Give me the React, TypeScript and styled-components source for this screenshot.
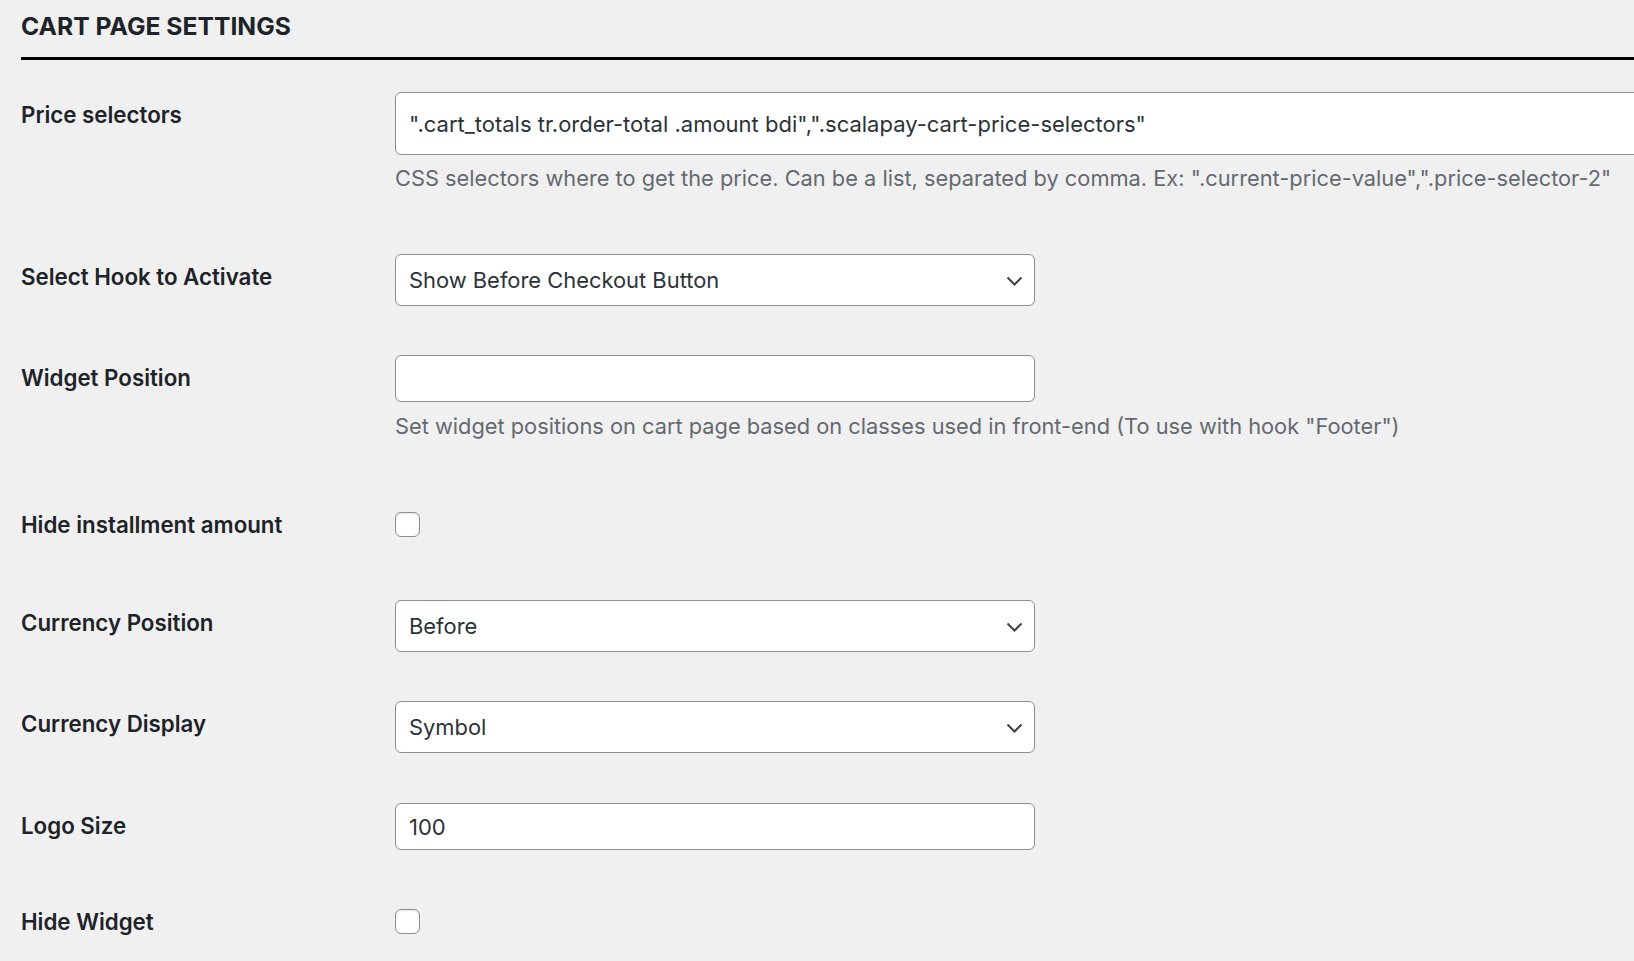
import React from 'react';
import styled, { createGlobalStyle } from 'styled-components';

const GlobalStyle = createGlobalStyle`
  html, body {
    margin: 0;
    background: #f0f0f1;
    overflow: hidden;
  }
  body {
    font-family: Inter, "Noto Sans", sans-serif;
    color: #1d2327;
  }
`;

const Page = styled.div`
  padding: 10px 0 0 21px;
`;

const Title = styled.h2`
  margin: 0;
  padding-bottom: 14.5px;
  border-bottom: 3px solid #000;
  font-size: 24.7px;
  font-weight: 700;
  line-height: 32.5px;
  color: #1d2327;
`;

const Row = styled.div<{ $top: number }>`
  display: grid;
  grid-template-columns: 374px 1fr;
  margin-top: ${({ $top }) => $top}px;
`;

// offset moves the label against the top of its field (negative for checkboxes)
const Label = styled.label<{ $offset?: number }>`
  margin-top: ${({ $offset }) => ($offset === undefined ? 7.6 : $offset)}px;
  font-size: 22.3px;
  font-weight: 600;
  line-height: 29px;
  color: #1d2327;
`;

const Field = styled.div`
  min-width: 0;
  display: flex;
  flex-direction: column;
  align-items: flex-start;
`;

const TextInput = styled.input<{ $width?: number; $height?: number }>`
  box-sizing: border-box;
  width: ${({ $width }) => $width ?? 640}px;
  height: ${({ $height }) => $height ?? 47}px;
  margin: 0;
  padding: 0 13px;
  border: 1px solid #8c8f94;
  border-radius: 6px;
  background: #fff;
  font-family: inherit;
  font-size: 22px;
  color: #2c3338;
  outline: none;
`;

const Description = styled.p<{ $top: number }>`
  margin: ${({ $top }) => $top}px 0 0;
  font-size: 21.8px;
  line-height: 27px;
  color: #646970;
  white-space: nowrap;
`;

const SelectWrap = styled.div`
  position: relative;
  width: 640px;
`;

const Select = styled.select`
  box-sizing: border-box;
  appearance: none;
  width: 100%;
  height: 52px;
  margin: 0;
  padding: 0 40px 0 13px;
  border: 1px solid #8c8f94;
  border-radius: 6px;
  background: #fff;
  font-family: inherit;
  font-size: 21.9px;
  color: #2c3338;
  outline: none;
`;

const Chevron = styled.svg`
  position: absolute;
  right: 12px;
  top: 22px;
  width: 17px;
  height: 10px;
  pointer-events: none;
`;

const Checkbox = styled.input.attrs({ type: 'checkbox' })`
  appearance: none;
  box-sizing: border-box;
  width: 25px;
  height: 25px;
  margin: 0;
  border: 1px solid #8c8f94;
  border-radius: 6px;
  background: #fff;
  box-shadow: inset 0 1px 2px rgba(0, 0, 0, 0.1);
`;

const Dropdown = ({ value, options }: { value: string; options: string[] }) => (
  <SelectWrap>
    <Select defaultValue={value}>
      {options.map((o) => (
        <option key={o}>{o}</option>
      ))}
    </Select>
    <Chevron viewBox="0 0 17 10">
      <path d="M1.5 1.5 L8.5 8.5 L15.5 1.5" fill="none" stroke="#3c434a" strokeWidth="2" />
    </Chevron>
  </SelectWrap>
);

const App = () => (
  <Page>
    <GlobalStyle />
    <Title>CART PAGE SETTINGS</Title>

    <Row $top={32}>
      <Label>Price selectors</Label>
      <Field>
        <TextInput
          $width={1260}
          $height={63}
          defaultValue={'".cart_totals tr.order-total .amount bdi",".scalapay-cart-price-selectors"'}
        />
        <Description $top={10.4}>
          CSS selectors where to get the price. Can be a list, separated by comma. Ex: ".current-price-value",".price-selector-2"
        </Description>
      </Field>
    </Row>

    <Row $top={61.6}>
      <Label>Select Hook to Activate</Label>
      <Field>
        <Dropdown
          value="Show Before Checkout Button"
          options={['Show Before Checkout Button', 'Show After Checkout Button', 'Footer']}
        />
      </Field>
    </Row>

    <Row $top={49}>
      <Label>Widget Position</Label>
      <Field>
        <TextInput />
        <Description $top={11.4}>
          Set widget positions on cart page based on classes used in front-end (To use with hook "Footer")
        </Description>
      </Field>
    </Row>

    <Row $top={71.6}>
      <Label $offset={-2}>Hide installment amount</Label>
      <Field>
        <Checkbox />
      </Field>
    </Row>

    <Row $top={61}>
      <Label>Currency Position</Label>
      <Field>
        <Dropdown value="Before" options={['Before', 'After']} />
      </Field>
    </Row>

    <Row $top={49}>
      <Label>Currency Display</Label>
      <Field>
        <Dropdown value="Symbol" options={['Symbol', 'Code', 'Name']} />
      </Field>
    </Row>

    <Row $top={50.5}>
      <Label>Logo Size</Label>
      <Field>
        <TextInput defaultValue="100" />
      </Field>
    </Row>

    <Row $top={59}>
      <Label $offset={-2}>Hide Widget</Label>
      <Field>
        <Checkbox />
      </Field>
    </Row>
  </Page>
);

export default App;
